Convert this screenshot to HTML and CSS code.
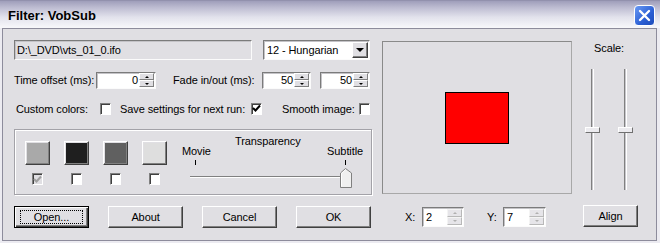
FILE: index.html
```html
<!DOCTYPE html>
<html lang="en">
<head>
    <meta charset="UTF-8">
    <title>Filter: VobSub</title>
    <link rel="stylesheet" href="styles.css">
</head>
<body>
    <div class="janela">
        <div class="titulo">
            <span class="titulo-texto">Filter: VobSub</span>
            <span class="fechar">
                <svg width="13" height="13" viewBox="0 0 13 13"><path d="M2 2 L11 11 M11 2 L2 11" stroke="#fff" stroke-width="2.4" stroke-linecap="round"/></svg>
            </span>
        </div>

        <div class="cliente">
            <div class="esquerda">
                <div class="linha l1">
                    <div class="campo ficheiro">D:\_DVD\vts_01_0.ifo</div>
                    <div class="campo combo"><span>12 - Hungarian</span><span class="seta"><i></i></span></div>
                </div>

                <div class="linha l2">
                    <span class="rot" style="width: 82px;">Time offset (ms):</span>
                    <div class="campo spin" style="width: 60px;"><span class="valor">0</span><span class="setas"><i class="cima"></i><i class="baixo"></i></span></div>
                    <span class="rot" style="width: 89px; margin-left: 17px;">Fade in/out (ms):</span>
                    <div class="campo spin" style="width: 49px;"><span class="valor">50</span><span class="setas"><i class="cima"></i><i class="baixo"></i></span></div>
                    <div class="campo spin" style="width: 50px; margin-left: 9px;"><span class="valor">50</span><span class="setas"><i class="cima"></i><i class="baixo"></i></span></div>
                </div>

                <div class="linha l3">
                    <span class="rot" style="width: 84px; margin-left: 2px;">Custom colors:</span>
                    <span class="caixa-sel"></span>
                    <span class="rot" style="width: 131px; margin-left: 9px;">Save settings for next run:</span>
                    <span class="caixa-sel marcada"><svg width="9" height="9" viewBox="0 0 9 9"><path d="M1 4 L3.5 6.5 L8 1.5" fill="none" stroke="#000" stroke-width="2"/></svg></span>
                    <span class="rot" style="width: 77px; margin-left: 20px;">Smooth image:</span>
                    <span class="caixa-sel"></span>
                </div>

                <div class="grupo">
                    <div class="cores">
                        <div class="cor">
                            <span class="amostra" style="background: #a9a9a9;"></span>
                            <span class="caixa-sel inativa"><svg width="9" height="9" viewBox="0 0 9 9"><path d="M1 4 L3.5 6.5 L8 1.5" fill="none" stroke="#a0a0a0" stroke-width="2"/></svg></span>
                        </div>
                        <div class="cor">
                            <span class="amostra" style="background: #1f1f1f;"></span>
                            <span class="caixa-sel"></span>
                        </div>
                        <div class="cor">
                            <span class="amostra" style="background: #606060;"></span>
                            <span class="caixa-sel"></span>
                        </div>
                        <div class="cor">
                            <span class="amostra" style="background: #dedede;"></span>
                            <span class="caixa-sel"></span>
                        </div>
                    </div>

                    <div class="transp">
                        <div class="transp-titulo">Transparency</div>
                        <div class="pontas"><span>Movie</span><span>Subtitle</span></div>
                        <div class="marcas"><i></i><i></i></div>
                        <div class="calha">
                            <span class="sulco"></span>
                            <svg class="cursor" width="12" height="20" viewBox="0 0 12 20"><path d="M0.5 19.5 V5 L5.5 0.5 L11.5 5 V19.5 Z" fill="#f0f0f0" stroke="#808080"/><path d="M1.5 18.5 V5.4 L5.5 1.8" fill="none" stroke="#fff"/></svg>
                        </div>
                    </div>
                </div>
            </div>

            <div class="previa">
                <div class="vermelho"></div>
            </div>

            <div class="escala">
                <span>Scale:</span>
                <div class="verticais">
                    <div class="vert"><span class="pega"></span></div>
                    <div class="vert"><span class="pega"></span></div>
                </div>
            </div>

            <div class="botoes">
                <div class="botao padrao"><span class="foco">Open...</span></div>
                <div class="botao">About</div>
                <div class="botao">Cancel</div>
                <div class="botao">OK</div>
            </div>

            <div class="xy">
                <span class="rot" style="width: 17px;">X:</span>
                <div class="campo spin leve" style="width: 42px;"><span class="valor esq">2</span><span class="setas"><i class="cima"></i><i class="baixo"></i></span></div>
                <span class="rot" style="width: 16px; margin-left: 23px;">Y:</span>
                <div class="campo spin leve" style="width: 43px;"><span class="valor esq">7</span><span class="setas"><i class="cima"></i><i class="baixo"></i></span></div>
            </div>

            <div class="alinhar">
                <div class="botao" style="width: 55px;">Align</div>
            </div>
        </div>
    </div>
</body>
</html>
```

FILE: styles.css
```css
body {
    margin: 0;
    font-family: "Liberation Sans", Arial, sans-serif;
    font-size: 11px;
    letter-spacing: -0.1px;
    color: #000;
    background: #ecebf1;
}
.janela {
    width: 660px;
    height: 243px;
    display: flex;
    flex-direction: column;
    background: #ecebf1;
}
.titulo {
    height: 28px;
    flex: none;
    display: flex;
    align-items: center;
    justify-content: space-between;
    padding: 0 5px 0 8px;
    background: linear-gradient(#9f9eba 0, #bebdd2 25%, #e2e2ec 60%, #f8f8fb 100%);
    border-top: 1px solid #9291ad;
    box-sizing: border-box;
}
.titulo-texto {
    font-weight: bold;
    font-size: 13px;
    letter-spacing: 0;
    margin-top: 2px;
}
.fechar {
    width: 21px;
    height: 21px;
    box-sizing: border-box;
    border: 1px solid #fff;
    border-radius: 4px;
    background: linear-gradient(135deg, #6a9af4, #2b5fd4 60%, #1e4cba);
    display: flex;
    align-items: center;
    justify-content: center;
    margin-top: 2px;
}
.cliente {
    flex: 1;
    margin: 0 3px 2px 2px;
    background: #e0dfe3;
    border: 1px solid #8d8c9c;
    padding: 11px 0 0 11px;
    display: grid;
    grid-template-columns: 358px 190px 54px;
    grid-template-rows: 155px 22px;
    column-gap: 10px;
    row-gap: 11px;
}
.esquerda {
    display: flex;
    flex-direction: column;
}
.linha {
    display: flex;
    align-items: center;
}
.l1 {
    height: 20px;
}
.l2 {
    height: 17px;
    margin-top: 12px;
}
.l3 {
    height: 18px;
    margin-top: 11px;
}
.rot {
    flex: none;
    white-space: nowrap;
}
.campo {
    box-sizing: border-box;
    height: 100%;
    border: 1px solid;
    border-color: #7b7b7b #fbfbfb #fbfbfb #7b7b7b;
    box-shadow: inset 1px 1px 0 #c4c3c7;
    background: #fff;
    display: flex;
    align-items: center;
}
.ficheiro {
    width: 238px;
    background: #e0dfe3;
    padding-left: 2px;
}
.combo {
    width: 107px;
    margin-left: 11px;
    justify-content: space-between;
    padding: 0 1px 0 3px;
}
.seta {
    width: 16px;
    height: 16px;
    box-sizing: border-box;
    background: #e0dfe3;
    border: 1px solid;
    border-color: #fff #404040 #404040 #fff;
    box-shadow: inset -1px -1px 0 #808080;
    display: flex;
    align-items: center;
    justify-content: center;
}
.seta i {
    border-left: 4px solid transparent;
    border-right: 4px solid transparent;
    border-top: 4px solid #000;
}
.spin {
    justify-content: space-between;
    padding: 0 1px 0 3px;
}
.valor {
    flex: 1;
    text-align: right;
    padding-right: 1px;
}
.valor.esq {
    text-align: left;
}
.setas {
    width: 15px;
    display: flex;
    flex-direction: column;
}
.setas i {
    height: 7px;
    box-sizing: border-box;
    background: #e0dfe3;
    border: 1px solid;
    border-color: #fff #808080 #808080 #fff;
    display: flex;
    align-items: center;
    justify-content: center;
}
.setas i::after {
    content: "";
    border-left: 2px solid transparent;
    border-right: 2px solid transparent;
}
.setas .cima::after {
    border-bottom: 2px solid #000;
}
.setas .baixo::after {
    border-top: 2px solid #000;
}
.leve .setas {
    margin-left: 4px;
}
.leve .setas i {
    height: 8px;
    background: #e6e5e9;
    border-color: #f4f4f4 #b8b8b8 #b8b8b8 #f4f4f4;
}
.leve .setas .cima::after {
    border-bottom-color: #b0b0b0;
}
.leve .setas .baixo::after {
    border-top-color: #b0b0b0;
}
.caixa-sel {
    flex: none;
    width: 11px;
    height: 12px;
    box-sizing: border-box;
    background: #fff;
    border: 1px solid;
    border-color: #808080 #fff #fff #808080;
    box-shadow: inset 1px 1px 0 #404040;
    display: flex;
    align-items: center;
    justify-content: center;
}
.caixa-sel.inativa {
    background: #e0dfe3;
}
.grupo {
    margin-top: 12px;
    height: 66px;
    box-sizing: border-box;
    border: 1px solid #a3a2a8;
    box-shadow: inset 1px 1px 0 #fff, 1px 1px 0 #fff;
    padding: 11px 0 0 10px;
    display: flex;
}
.cores {
    display: flex;
    gap: 14px;
}
.cor {
    display: flex;
    flex-direction: column;
    align-items: center;
    gap: 8px;
}
.amostra {
    width: 25px;
    height: 24px;
    box-sizing: border-box;
    border: 1px solid;
    border-color: #fff #404040 #404040 #fff;
    box-shadow: inset -1px -1px 0 #808080, inset 1px 1px 0 #e0dfe3;
}
.transp {
    width: 181px;
    margin-left: 15px;
    margin-top: -6px;
    display: flex;
    flex-direction: column;
}
.transp-titulo {
    margin-left: 53px;
    line-height: 13px;
}
.pontas {
    display: flex;
    justify-content: space-between;
    line-height: 13px;
    margin-top: -3px;
}
.marcas {
    display: flex;
    justify-content: space-between;
    padding: 0 17px 0 13px;
    height: 6px;
    margin-top: 2px;
}
.marcas i {
    width: 1px;
    height: 5px;
    background: #000;
}
.calha {
    position: relative;
    height: 22px;
}
.sulco {
    display: block;
    margin: 10px 0 0 8px;
    width: 153px;
    height: 2px;
    box-sizing: border-box;
    border-top: 1px solid #808080;
    border-bottom: 1px solid #fff;
}
.cursor {
    position: absolute;
    left: 158px;
    top: 2px;
}
.previa {
    margin-top: 1px;
    height: 153px;
    box-sizing: border-box;
    border: 1px solid #8a8a8a;
    border-right-color: #a8a8a8;
    border-bottom-color: #a8a8a8;
    display: flex;
    align-items: center;
    justify-content: center;
}
.vermelho {
    width: 64px;
    height: 52px;
    box-sizing: border-box;
    background: #ff0000;
    border: 1px solid #000;
}
.escala {
    display: flex;
    flex-direction: column;
    align-items: center;
    padding-top: 2px;
}
.verticais {
    display: flex;
    gap: 30px;
    margin-top: 15px;
}
.vert {
    position: relative;
    width: 3px;
    height: 121px;
    box-sizing: border-box;
    border-left: 1px solid #808080;
    border-right: 1px solid #fff;
    background: #c8c7cc;
}
.pega {
    position: absolute;
    left: -7px;
    top: 58px;
    width: 15px;
    height: 6px;
    box-sizing: border-box;
    background: #ecebef;
    border: 1px solid;
    border-color: #fff #707070 #707070 #fff;
}
.botoes {
    display: flex;
    gap: 19px;
}
.botao {
    width: 75px;
    height: 22px;
    box-sizing: border-box;
    background: #e0dfe3;
    border: 1px solid;
    border-color: #fff #404040 #404040 #fff;
    box-shadow: inset -1px -1px 0 #808080;
    display: flex;
    align-items: center;
    justify-content: center;
}
.botao.padrao {
    border: 1px solid #000;
    box-shadow: inset 1px 1px 0 #fff, inset -1px -1px 0 #404040, inset -2px -2px 0 #808080;
}
.foco {
    width: 63px;
    height: 14px;
    box-sizing: border-box;
    border: 1px dotted #000;
    display: flex;
    align-items: center;
    justify-content: center;
}
.xy {
    display: flex;
    align-items: center;
    padding-left: 23px;
}
.xy .campo {
    height: 20px;
}
.alinhar {
    padding-left: 1px;
    margin-top: -1px;
}
```
